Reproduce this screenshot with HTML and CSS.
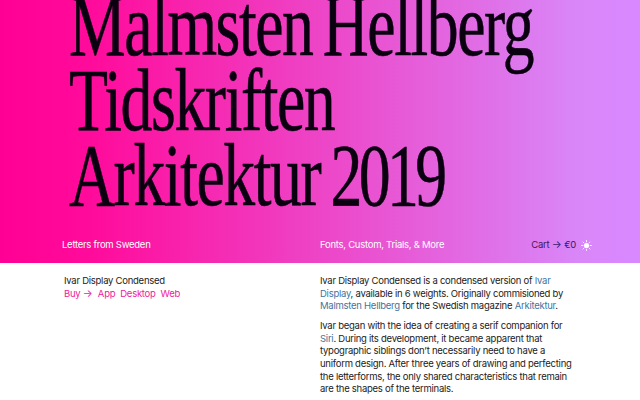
FILE: index.html
```html
<!DOCTYPE html>
<html lang="en">
<head>
<meta charset="utf-8">
<title>Ivar Display Condensed</title>
<link rel="stylesheet" href="styles.css">
</head>
<body>
<header class="hero">
  <h1 class="headline">Malmsten Hellberg<br>Tidskriften<br>Arkitektur <span class="year">2019</span></h1>
  <nav class="nav">
    <div class="nav-left">Letters from Sweden</div>
    <div class="nav-right">
      <span>Fonts, Custom, Trials, &amp; More</span>
      <span class="cart">
        <span>Cart <span class="arrow">→</span> €0</span>
        <svg class="sun" viewBox="0 0 12 12" width="11" height="11" aria-hidden="true">
          <circle cx="6" cy="6" r="2.8" fill="#fff"/>
          <g stroke="#fff" stroke-width="1" stroke-linecap="round">
            <path d="M6 .6v1.400M6 10v1.400M.6 6H2M10 6h1.400M2.200 2.200l1 1M8.800 8.800l1 1M2.200 9.800l1-1M8.800 3.200l1-1"/>
          </g>
        </svg>
      </span>
    </div>
  </nav>
</header>
<main class="content">
  <section class="intro">
    <div>Ivar Display Condensed</div>
    <div class="links"><a href="#">Buy <span class="arrow">→</span></a><a href="#">App</a><a href="#">Desktop</a><a href="#">Web</a></div>
  </section>
  <section class="copy">
    <p>Ivar Display Condensed is a condensed version of <a href="#">Ivar Display</a>, available in 6 weights. Originally commisioned by <a href="#">Malmsten Hellberg</a> for the Swedish magazine <a href="#">Arkitektur</a>.</p>
    <p>Ivar began with the idea of creating a serif companion for <a href="#">Siri</a>. During its development, it became apparent that typographic siblings don’t necessarily need to have a uniform design. After three years of drawing and perfecting the letterforms, the only shared characteristics that remain are the shapes of the terminals.</p>
  </section>
</main>
</body>
</html>
```
FILE: styles.css
```css
* { box-sizing: border-box; }
html, body { margin: 0; padding: 0; }
body {
  width: 640px;
  height: 400px;
  overflow: hidden;
  background: #fff;
  color: #222;
  font-family: Inter, "Liberation Sans", sans-serif;
  font-size: 9.5px;
  letter-spacing: -.26px;
  line-height: 12.6px;
}
a { text-decoration: none; }
.arrow { font-size: 10.5px; line-height: 0; letter-spacing: 0; }
.hero {
  height: 263px;
  overflow: hidden;
  display: flex;
  flex-direction: column;
  background: linear-gradient(90deg, #ff0095 0%, #ff0c9c 15%, #d986f8 90%, #d988ff 100%);
}
.headline {
  margin: -12px 0 0 69px;
  width: 800px;
  font-family: "Liberation Serif", serif;
  font-weight: 400;
  font-size: 88px;
  line-height: 75px;
  color: #0a0010;
  letter-spacing: -2px;
  word-spacing: -6px;
  transform: scaleX(.725);
  transform-origin: left top;
  -webkit-text-stroke: .5px #0a0010;
}
.year { letter-spacing: -5px; }
.nav {
  margin-top: auto;
  padding: 0 48px 12px 62px;
  display: grid;
  grid-template-columns: 258px 1fr;
  color: #fff;
  transform: translateY(1px);
}
.nav-right { display: flex; justify-content: space-between; }
.cart { color: #40185e; display: flex; align-items: center; gap: 5px; }
.content {
  display: grid;
  grid-template-columns: 256px 1fr;
  padding: 12px 64px 0;
}
.links { display: flex; gap: 5px; color: #f0209c; }
.links a { color: #f0209c; }
.copy { width: 254px; }
.copy p { margin: 0 0 7.5px; }
.copy a { color: #44739f; }
```
